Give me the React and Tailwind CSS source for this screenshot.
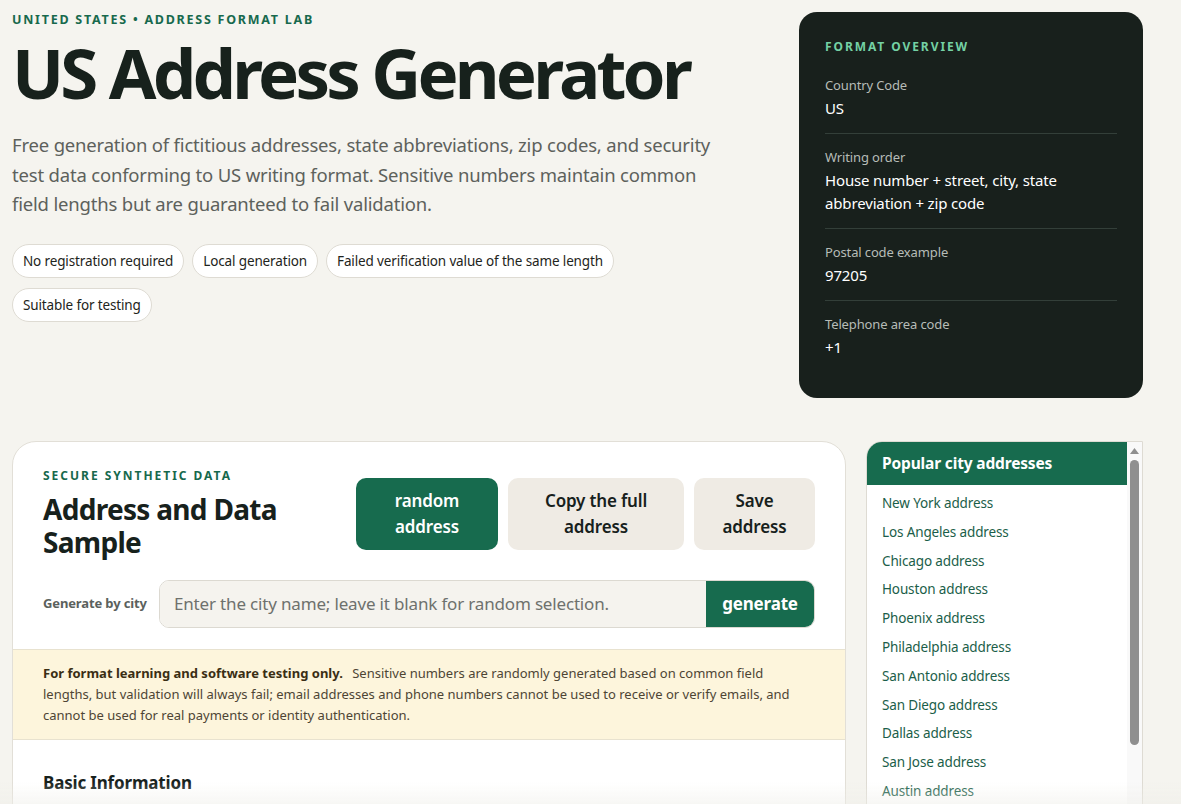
const chips = [
  'No registration required',
  'Local generation',
  'Failed verification value of the same length',
  'Suitable for testing',
];

const overview = [
  { label: 'Country Code', value: 'US' },
  { label: 'Writing order', value: 'House number + street, city, state abbreviation + zip code' },
  { label: 'Postal code example', value: '97205' },
  { label: 'Telephone area code', value: '+1' },
];

const cities = [
  'New York', 'Los Angeles', 'Chicago', 'Houston', 'Phoenix', 'Philadelphia',
  'San Antonio', 'San Diego', 'Dallas', 'San Jose', 'Austin', 'Jacksonville',
  'Fort Worth', 'Columbus', 'Charlotte', 'San Francisco', 'Indianapolis',
  'Seattle', 'Denver', 'Washington',
];

function Hero() {
  return (
    <div className="pt-[12px]">
      <p className="text-[12.5px] font-bold uppercase tracking-[0.14em] leading-4 text-[#17694d]">
        United States • Address Format Lab
      </p>
      <h1 className="mt-[7px] text-[69px] font-bold leading-[74px] tracking-[-0.055em] text-[#17211c]">
        US Address Generator
      </h1>
      <p className="mt-[21px] max-w-[720px] text-[18.5px] leading-[29.5px] tracking-[-0.01em] text-[#5d615c]">
        Free generation of fictitious addresses, state abbreviations, zip codes, and security test data conforming to US writing format. Sensitive numbers maintain common field lengths but are guaranteed to fail validation.
      </p>
      <div className="mt-[25px] flex max-w-[720px] flex-wrap gap-x-[8px] gap-y-[10px]">
        {chips.map((c) => (
          <span
            key={c}
            className="rounded-full border border-[#dedbd3] bg-white px-[10px] py-[7px] text-[13.5px] leading-[18px] tracking-[-0.01em] text-[#1e2420]"
          >
            {c}
          </span>
        ))}
      </div>
    </div>
  );
}

function Overview() {
  return (
    <aside className="mt-[12px] h-[386px] rounded-[18px] bg-[#18201c] px-[26px] pt-[27px] text-white">
      <p className="text-[12px] font-bold uppercase tracking-[0.16em] leading-4 text-[#74d1a4]">
        Format overview
      </p>
      <div className="mt-[21px]">
        {overview.map((o, i) => (
          <div
            key={o.label}
            className={i === 0 ? 'pb-[13px]' : 'border-t border-[#333f39] pt-[14px] pb-[13px]'}
          >
            <p className="text-[13px] leading-[18px] tracking-[-0.01em] text-[#b6bcb7]">{o.label}</p>
            <p className="mt-[3px] text-[15px] leading-[23px] tracking-[-0.01em] text-white">{o.value}</p>
          </div>
        ))}
      </div>
    </aside>
  );
}

function Generator() {
  return (
    <section className="overflow-hidden rounded-[24px] border border-[#e2dfd7] bg-white">
      <div className="px-[30px] pt-[26px] pb-[21px]">
        <div className="flex items-center gap-6">
          <div className="flex-1">
            <p className="text-[12px] font-bold uppercase tracking-[0.165em] leading-4 text-[#17694d]">
              Secure synthetic data
            </p>
            <h2 className="mt-[9px] text-[28px] font-bold leading-[33px] tracking-[-0.025em] text-[#17211c]">
              Address and Data Sample
            </h2>
          </div>
          <div className="flex gap-[10px]">
            <button className="h-[72px] w-[142px] rounded-[10px] bg-[#176b4e] px-4 text-[17px] font-semibold leading-[26px] tracking-[-0.01em] text-white">
              random address
            </button>
            <button className="h-[72px] w-[176px] rounded-[10px] bg-[#efebe4] px-4 text-[17px] font-semibold leading-[26px] tracking-[-0.01em] text-[#17211c]">
              Copy the full address
            </button>
            <button className="h-[72px] w-[121px] rounded-[10px] bg-[#efebe4] px-4 text-[17px] font-semibold leading-[26px] tracking-[-0.01em] text-[#17211c]">
              Save address
            </button>
          </div>
        </div>
        <div className="mt-[21px] flex items-center gap-[9px]">
          <label className="w-[107px] text-[13px] font-bold tracking-[-0.01em] text-[#5b615d]">Generate by city</label>
          <div className="flex h-[48px] flex-1 overflow-hidden rounded-[10px] border border-[#dcd9d1]">
            <input
              className="flex-1 bg-[#f5f3ee] px-[14px] text-[17px] tracking-[-0.01em] text-[#17211c] outline-none placeholder:text-[#6e716d]"
              placeholder="Enter the city name; leave it blank for random selection."
            />
            <button className="w-[108px] bg-[#176b4e] text-[17px] font-bold tracking-[-0.01em] text-white">generate</button>
          </div>
        </div>
      </div>
      <div className="border-y border-[#e8e2cf] bg-[#fdf5dc] pl-[30px] pr-[34px] py-[13px] text-[13px] leading-[21px] text-[#4e4535]">
        <strong className="mr-[6px] font-bold text-[#3a2e14]">For format learning and software testing only.</strong>{' '}
        Sensitive numbers are randomly generated based on common field lengths, but validation will always fail; email addresses and phone numbers cannot be used to receive or verify emails, and cannot be used for real payments or identity authentication.
      </div>
      <div className="px-[30px] pt-[31px] pb-10">
        <h3 className="text-[17px] font-bold leading-6 tracking-[-0.01em] text-[#17211c]">Basic Information</h3>
        <div className="mt-4 h-40" />
      </div>
    </section>
  );
}

function CityList() {
  return (
    <aside className="flex h-[560px] overflow-hidden rounded-tl-[16px] border border-[#dedbd3] bg-white">
      <div className="flex-1">
        <h3 className="h-[43px] bg-[#176b4e] px-[15px] text-[15.5px] font-bold leading-[43px] tracking-[-0.01em] text-white">
          Popular city addresses
        </h3>
        <ul className="pt-[4px] pb-3">
          {cities.map((c) => (
            <li key={c} className="px-[15px] text-[13.5px] leading-[28.8px] tracking-[-0.01em] text-[#1b5e49]">
              <a href="#">{c} address</a>
            </li>
          ))}
        </ul>
      </div>
      {/* scrollbar track */}
      <div className="flex w-[15px] flex-col items-center bg-[#f9f9f9] pt-[6px]">
        <svg width="9" height="6" viewBox="0 0 9 6" className="block">
          <path d="M4.5 0 L9 6 L0 6 Z" fill="#8f8f8f" />
        </svg>
        <div className="mt-[6px] h-[285px] w-[9px] rounded-[5px] bg-[#8f8f8f]" />
      </div>
    </aside>
  );
}

export default function App() {
  return (
    <div className="relative min-h-screen bg-[#f5f4ef] font-['Noto_Sans','Open_Sans',sans-serif]">
      <div className="ml-[12px] w-[1131px]">
        <div className="grid grid-cols-[1fr_344px] gap-6">
          <Hero />
          <Overview />
        </div>
        <div className="mt-[43px] grid grid-cols-[834px_277px] items-start gap-[20px]">
          <Generator />
          <CityList />
        </div>
      </div>
      <div className="pointer-events-none fixed inset-x-0 bottom-0 h-[22px] bg-gradient-to-t from-[#f0efea]/50 to-transparent" />
    </div>
  );
}
